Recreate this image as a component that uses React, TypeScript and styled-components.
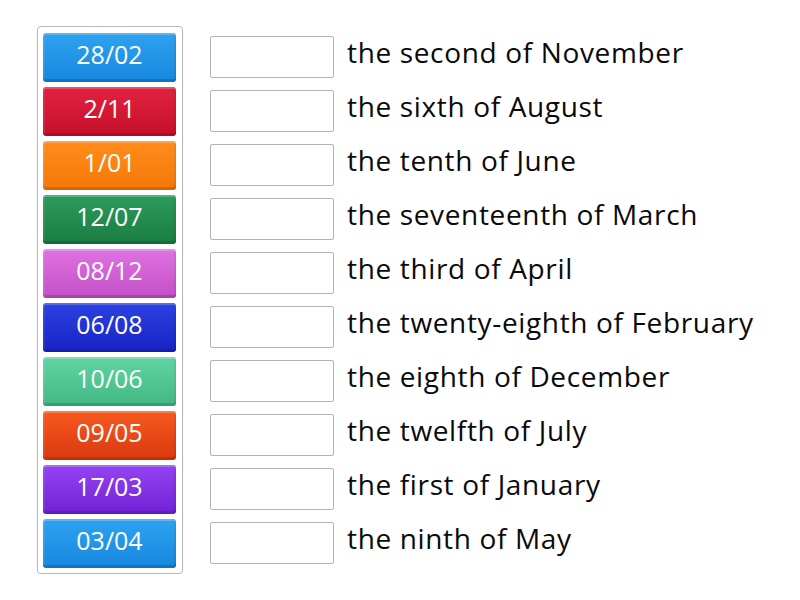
import React from "react";
import styled, { createGlobalStyle } from "styled-components";

const Global = createGlobalStyle`
  html, body { margin: 0; padding: 0; background: #ffffff; }
  body { font-family: "Open Sans", "Noto Sans", sans-serif; }
`;

const Page = styled.div`
  display: flex;
  align-items: flex-start;
  gap: 27px;
  padding: 26px 0 0 37px;
`;

const Panel = styled.div`
  display: flex;
  flex-direction: column;
  gap: 5px;
  padding: 6px 6px 5px 5px;
  border: 1px solid #b8b8b8;
  border-radius: 4px;
  box-shadow: 0 1px 2px rgba(0,0,0,0.08);
`;

const Tile = styled.div<{ $top: string; $bottom: string }>`
  box-sizing: border-box;
  width: 133px;
  height: 49px;
  border-radius: 3px;
  background: linear-gradient(to bottom, ${p => p.$top}, ${p => p.$bottom});
  box-shadow: inset 0 2px 0 rgba(255,255,255,0.22), inset 0 -3px 0 rgba(0,0,0,0.14), inset 2px 0 0 rgba(255,255,255,0.08), inset -2px 0 0 rgba(0,0,0,0.06);
  display: flex;
  align-items: center;
  justify-content: center;
  color: #ffffff;
  font-size: 25px;
  line-height: 1;
  padding-bottom: 7px;
`;

const List = styled.div`
  display: flex;
  flex-direction: column;
  gap: 5px;
  padding-top: 7px;
`;

const Row = styled.div`
  display: flex;
  align-items: center;
  height: 49px;
  gap: 13px;
`;

const Slot = styled.div`
  box-sizing: border-box;
  width: 124px;
  height: 42px;
  border: 1px solid #b4b4b4;
  border-radius: 2px;
  background: #fff;
  margin-top: -2px;
`;

const Label = styled.div`
  font-size: 28px;
  letter-spacing: 0.65px;
  line-height: 1;
  color: #0a0a0a;
  white-space: nowrap;
  padding-bottom: 11px;
`;

const tiles: [string, string, string][] = [
  ["28/02", "#2ea3f0", "#1787de"],
  ["2/11", "#e2223f", "#c50f2b"],
  ["1/01", "#ff8c1c", "#f57806"],
  ["12/07", "#2c9c5c", "#1a7c40"],
  ["08/12", "#e072e2", "#c24fc6"],
  ["06/08", "#2c42e2", "#1822c4"],
  ["10/06", "#60d4a2", "#42b885"],
  ["09/05", "#f75a20", "#da380e"],
  ["17/03", "#9444f2", "#7120d4"],
  ["03/04", "#2ea3f0", "#1787de"],
];

const labels = [
  "the second of November",
  "the sixth of August",
  "the tenth of June",
  "the seventeenth of March",
  "the third of April",
  "the twenty-eighth of February",
  "the eighth of December",
  "the twelfth of July",
  "the first of January",
  "the ninth of May",
];

export default function App() {
  return (
    <>
      <Global />
      <Page>
        <Panel>
          {tiles.map(([t, a, b]) => (
            <Tile key={t} $top={a} $bottom={b}>{t}</Tile>
          ))}
        </Panel>
        <List>
          {labels.map(l => (
            <Row key={l}>
              <Slot />
              <Label>{l}</Label>
            </Row>
          ))}
        </List>
      </Page>
    </>
  );
}
